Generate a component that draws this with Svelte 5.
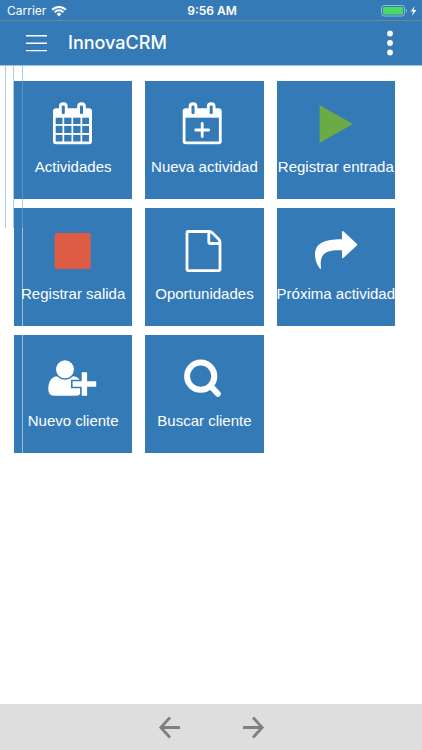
<script lang="ts">
  type Tile = { icon: string; label: string };

  const tiles: Tile[] = [
    { icon: 'calendar', label: 'Actividades' },
    { icon: 'calendar-plus', label: 'Nueva actividad' },
    { icon: 'play', label: 'Registrar entrada' },
    { icon: 'stop', label: 'Registrar salida' },
    { icon: 'file', label: 'Oportunidades' },
    { icon: 'share', label: 'Próxima actividad' },
    { icon: 'user-plus', label: 'Nuevo cliente' },
    { icon: 'search', label: 'Buscar cliente' },
  ];

  // calendar grid cells: [start, size]
  const cols = [[6.7, 6.8], [15.2, 7.3], [24.2, 7.3], [33.2, 6.8]];
  const rows = [[15.7, 6.3], [23.9, 7.1], [32.9, 6.6]];
</script>

{#snippet calendarTop()}
  <rect x="4" y="6.3" width="39" height="36" rx="3" fill="#fff" />
  <rect x="10" y="0.3" width="8.6" height="13" rx="4" fill="#fff" />
  <rect x="28.2" y="0.3" width="8.6" height="13" rx="4" fill="#fff" />
  <rect class="hole" x="12.8" y="3.4" width="3" height="8.6" rx="1" />
  <rect class="hole" x="31" y="3.4" width="3" height="8.6" rx="1" />
{/snippet}

<div class="app">
  <div class="status">
    <div class="carrier">
      <span>Carrier</span>
      <svg width="16" height="12" viewBox="0 0 16 12" fill="none" stroke="#fff" stroke-width="2" aria-hidden="true">
        <path d="M1.2 4.8a9.6 9.6 0 0 1 13.6 0M3.6 7.2a6.2 6.2 0 0 1 8.8 0" />
        <path d="M8 11.4 5.6 9a3.4 3.4 0 0 1 4.8 0z" fill="#fff" stroke="none" />
      </svg>
    </div>
    <time>9:56 AM</time>
    <div class="power">
      <svg width="36" height="12" viewBox="0 0 36 12" aria-hidden="true">
        <rect x="0.5" y="0.5" width="23" height="10.5" rx="2.5" fill="none" stroke="#93b9dc" />
        <rect x="2" y="2" width="20" height="7.5" rx="1" fill="#4cd964" />
        <path d="M25 3.8c1.4.6 1.4 3.3 0 3.9z" fill="#93b9dc" />
        <path d="M33.6 1 29.6 6.6h2.6L31 10.8l4.4-5.7h-2.7z" fill="#fff" />
      </svg>
    </div>
  </div>

  <header>
    <button class="menu" aria-label="Menú">
      <svg width="22" height="18" viewBox="0 0 22 18" stroke="#fff" stroke-width="1.4" aria-hidden="true">
        <path d="M0 1.8h21M0 9.2h21M0 16.6h21" />
      </svg>
    </button>
    <h1>InnovaCRM</h1>
    <button class="more" aria-label="Más opciones">
      <svg width="6" height="26" viewBox="0 0 6 26" fill="#fff" aria-hidden="true">
        <circle cx="3" cy="3.5" r="2.9" />
        <circle cx="3" cy="13" r="2.9" />
        <circle cx="3" cy="22.5" r="2.9" />
      </svg>
    </button>
  </header>

  <main>
    <div class="grid">
      {#each tiles as tile}
        <button class="tile">
          <svg class="icon" width="48" height="44" viewBox="0 0 48 44" aria-hidden="true">
            {#if tile.icon === 'calendar'}
              {@render calendarTop()}
              {#each rows as [y, h]}
                {#each cols as [x, w]}
                  <rect class="hole" {x} {y} width={w} height={h} />
                {/each}
              {/each}
            {:else if tile.icon === 'calendar-plus'}
              <g transform="translate(-1.3 0)">
                {@render calendarTop()}
                <rect class="hole" x="6.8" y="15.7" width="33.4" height="23.8" />
                <path d="M23.5 21.5v13M17 28h13" stroke="#fff" stroke-width="2.8" stroke-linecap="round" />
              </g>
            {:else if tile.icon === 'play'}
              <path d="M7.6 3.8v36.4q.1.8.8.4l31.6-18q.8-.6 0-1.2L8.400 3.400q-.7-.4-.8.4z" fill="#6aab46" />
            {:else if tile.icon === 'stop'}
              <rect x="5.6" y="4" width="36" height="36" rx="1.2" fill="#dd5c43" />
            {:else if tile.icon === 'file'}
              <path
                d="M8.3 2.5h20.9q1.8 0 3 1.2l6.6 6.6q1.2 1.2 1.2 3v27q0 1.3-1.3 1.3H8.300Q7 41.600 7 40.300V3.800Q7 2.500 8.300 2.500zM28.800 2.500v11q0 1 1 1H40"
                fill="none" stroke="#fff" stroke-width="2.8" stroke-linejoin="round"
              />
            {:else if tile.icon === 'share'}
              <path
                d="M30 3.2q0-1.800 1.600-.6L44.800 14.700q1 .9 0 1.800L31.600 28.700q-1.600 1.200-1.600-.6V21.300C17 20.600 6.800 22.500 9 38.500q.1 2.100-1.200 1.100C4.500 35.500 3 30 3 25.800 3 13.500 14 10.100 30 10.300z"
                fill="#fff"
              />
            {:else if tile.icon === 'user-plus'}
              <path d="M8.5 20.3q8 5 15 0 9 0 9 12.500v1q0 6-6 6H5.500q-6.200 0-6.200-6.300 0-12.500 9.200-13.200z" fill="#fff" />
              <circle class="head" cx="16" cy="13.3" r="9.7" />
              <path class="plus-edge" d="M35.4 14.600v26.800M22 28h26.800" />
              <path d="M35.4 16.200v23.600M23.600 28h23.600" stroke="#fff" stroke-width="5.4" />
            {:else}
              <circle cx="20.7" cy="20.2" r="13.600" fill="none" stroke="#fff" stroke-width="6" />
              <path d="M31 30.500l6.800 7.300" stroke="#fff" stroke-width="6" stroke-linecap="round" />
            {/if}
          </svg>
          <span>{tile.label}</span>
        </button>
      {/each}
    </div>

    <i class="guide outer"></i>
    <i class="guide middle"></i>
    <i class="guide inner"></i>
    <i class="guide inner-low"></i>
  </main>

  <footer>
    <button aria-label="Atrás">
      <svg width="24" height="24" viewBox="0 0 24 24" aria-hidden="true">
        <path d="M12 2.500 2.800 12.500l9.200 10M2.800 12.500H22" />
      </svg>
    </button>
    <button aria-label="Adelante">
      <svg width="24" height="24" viewBox="0 0 24 24" aria-hidden="true">
        <path d="M12 2.500l9.200 10-9.200 10M21.200 12.500H2" />
      </svg>
    </button>
  </footer>
</div>

<style>
  :global(body) { margin: 0; background: #fff; }

  .app {
    --blue: #337ab7;
    min-height: 100vh;
    display: flex;
    flex-direction: column;
    font-family: "Liberation Sans", Arial, sans-serif;
  }

  button {
    border: 0;
    padding: 0;
    background: none;
    font: inherit;
    color: inherit;
    cursor: pointer;
  }
  svg { display: block; }

  .status {
    display: grid;
    grid-template-columns: 1fr auto 1fr;
    align-items: center;
    height: 20px;
    padding: 1px 5px 0 7px;
    box-sizing: border-box;
    background: var(--blue);
    color: #fff;
    font: 12px/20px Inter, sans-serif;
  }
  .carrier { display: flex; align-items: center; gap: 5px; }
  .status time { font-weight: 600; }
  .power { display: flex; justify-content: flex-end; }

  header {
    display: flex;
    align-items: center;
    height: 46px;
    box-sizing: border-box;
    padding: 0 29px 0 26px;
    border-top: 1px solid #6f8694;
    border-bottom: 1px solid #a3c3df;
    background: var(--blue);
    color: #fff;
  }
  h1 {
    flex: 1;
    margin: 0 0 0 20px;
    font: 500 18px/24px Inter, sans-serif;
  }

  main { flex: 1; position: relative; }
  .grid {
    display: grid;
    grid-template-columns: repeat(3, 1fr);
    gap: 9px 13px;
    padding: 15px 27px 15px 14px;
  }

  .tile {
    display: flex;
    flex-direction: column;
    align-items: center;
    gap: 11px;
    height: 118px;
    padding-top: 21px;
    box-sizing: border-box;
    justify-content: flex-start;
    background: var(--blue);
    color: #fff;
    font-size: 15px;
    line-height: 20px;
    white-space: nowrap;
  }
  .icon { overflow: visible; }
  .hole { fill: var(--blue); }
  .head { fill: #fff; stroke: var(--blue); stroke-width: 1.5; }
  .plus-edge { stroke: var(--blue); stroke-width: 8.6; }

  /* thin rules running down the left side, over the tiles */
  .guide {
    position: absolute;
    top: 0;
    width: 1px;
    height: 162px;
    background: rgba(116, 168, 216, 0.6);
    pointer-events: none;
  }
  .outer { left: 5px; }
  .middle { left: 13px; }
  .inner { left: 22px; }
  .inner-low {
    left: 22px;
    top: 162px;
    height: 225px;
    background: rgba(255, 255, 255, 0.5);
  }

  footer {
    display: flex;
    justify-content: center;
    align-items: center;
    gap: 59px;
    height: 46px;
    background: #dedede;
  }
  footer path { fill: none; stroke: #808080; stroke-width: 2.8; }
</style>
